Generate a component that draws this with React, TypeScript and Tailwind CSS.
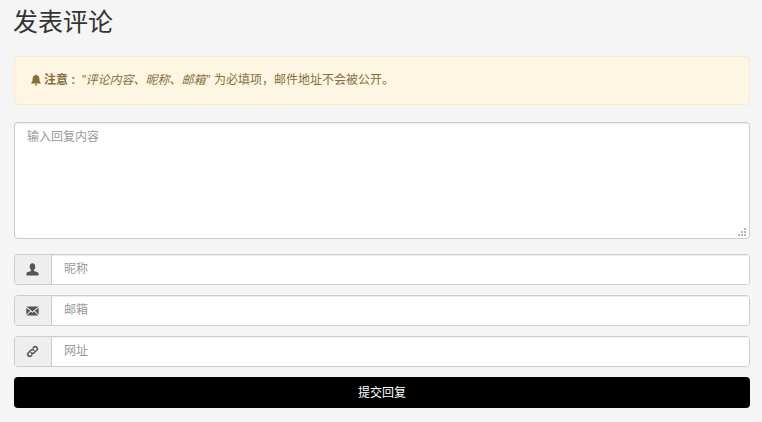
const font = "font-['Liberation_Sans','Noto_Sans_CJK_SC',sans-serif]";

function Field({ placeholder, icon }: { placeholder: string; icon: React.ReactNode }) {
  return (
    <div className="flex h-[31px] rounded-[4px] border border-[#cccccc] overflow-hidden">
      <span className="flex w-[37px] shrink-0 items-center justify-center border-r border-[#cccccc] bg-[#eeeeee] pr-[1px] text-[#555555]">{icon}</span>
      <input
        placeholder={placeholder}
        className="min-w-0 flex-1 bg-white px-3 pb-[2px] text-[12px] text-[#555555] outline-none shadow-[inset_0_1px_1px_rgba(0,0,0,0.075)] placeholder:text-[#999999]"
      />
    </div>
  );
}

export default function App() {
  return (
    <div className={`${font} h-[422px] w-[762px] overflow-hidden bg-[#f5f5f5] pl-[14px] pr-[12px] pt-[5px] text-[12px] text-[#333333]`}>
      <h3 className="ml-[-1px] h-[34px] text-[25px] leading-[34px] font-normal">发表评论</h3>
      <div className="mt-[17px] flex h-[49px] items-center rounded-[4px] border border-[#faebcc] bg-[#fdf6e3] pb-[2px] pl-[15px] text-[#8a6d3b]">
        <svg viewBox="0 0 12 12" className="mr-[2px] h-[12px] w-[12px]" fill="currentColor">
          <path d="M6 0.4c.5 0 .8.3.8.8 1.900.4 2.600 1.900 2.600 3.700 0 2.200.6 3 1.400 3.900v.7H1.200v-.7C2 7.900 2.600 7.100 2.600 4.900c0-1.800.7-3.300 2.600-3.700 0-.5.3-.8.8-.8z" />
          <path d="M4.700 10.200h2.600c0 .8-.6 1.400-1.300 1.400s-1.300-.6-1.300-1.400z" />
        </svg>
        <strong className="font-bold">注意 : </strong>
        <em className="ml-[6px] italic">"评论内容、昵称、邮箱"</em>
        <span className="ml-[4px]">为必填项，邮件地址不会被公开。</span>
      </div>
      <div className="relative mt-[17px] h-[117px]">
        <textarea
          placeholder="输入回复内容"
          className="block h-full w-full resize-none rounded-[4px] border border-[#cccccc] bg-white px-3 py-[5px] text-[12px] text-[#555555] outline-none shadow-[inset_0_1px_1px_rgba(0,0,0,0.075)] placeholder:text-[#999999]"
        />
        <svg viewBox="0 0 8 8" className="absolute right-[4px] bottom-[3px] h-[8px] w-[8px]" fill="#b5b5b5">
          <rect x="6" y="0" width="2" height="2" />
          <rect x="3" y="3" width="2" height="2" />
          <rect x="6" y="3" width="2" height="2" />
          <rect x="0" y="6" width="2" height="2" />
          <rect x="3" y="6" width="2" height="2" />
          <rect x="6" y="6" width="2" height="2" />
        </svg>
      </div>
      <div className="mt-[15px] flex flex-col gap-[10px]">
        <Field
          placeholder="昵称"
          icon={
            <svg viewBox="0 0 14 14" className="h-[13px] w-[13px]" fill="currentColor">
              <path d="M7 .2c2 0 3 1.500 3 3.500 0 1.500-.6 2.900-1.300 3.700v1.300c1.600.7 4.800 1.100 4.800 2.700v2.100H.5v-2.100c0-1.600 3.200-2 4.800-2.700V7.400C4.600 6.600 4 5.200 4 3.700c0-2 1-3.500 3-3.500z" />
            </svg>
          }
        />
        <Field
          placeholder="邮箱"
          icon={
            <svg viewBox="0 0 14 11" className="h-[10px] w-[13px]" fill="currentColor">
              <path d="M.3.500h13.400L7 6z" />
              <path d="M.2 1.800 4.400 5.300.2 9.600z" />
              <path d="M13.800 1.800 9.600 5.300l4.200 4.300z" />
              <path d="M5.200 6 7 7.500 8.800 6l4.600 4.500H.6z" />
            </svg>
          }
        />
        <Field
          placeholder="网址"
          icon={
            <svg viewBox="0 0 14 14" className="h-[13px] w-[13px]" fill="none" stroke="currentColor" strokeWidth="1.700" strokeLinecap="round">
              <path d="M5.600 8.400a2.200 2.200 0 0 0 3.100 0l3-3a2.200 2.200 0 0 0-3.100-3.100L7.700 3.200" />
              <path d="M8.400 5.600a2.200 2.200 0 0 0-3.100 0l-3 3a2.200 2.200 0 0 0 3.100 3.100l.9-.9" />
            </svg>
          }
        />
      </div>
      <button className="mt-[10px] block h-[31px] w-full rounded-[4px] bg-black text-[12px] text-white">提交回复</button>
    </div>
  );
}
